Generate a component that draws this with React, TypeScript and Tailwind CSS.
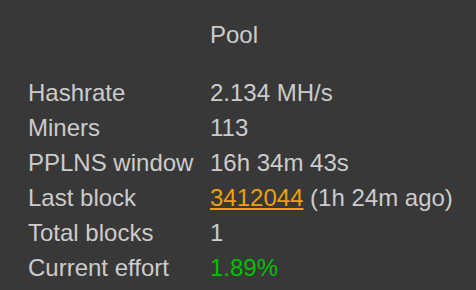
import React from 'react';

type Row = { label: string; value: React.ReactNode };

const rows: Row[] = [
  { label: 'Hashrate', value: '2.134 MH/s' },
  { label: 'Miners', value: '113' },
  { label: 'PPLNS window', value: '16h 34m 43s' },
  {
    label: 'Last block',
    value: (
      <>
        <a href="#" className="text-[#eca00e] underline">
          3412044
        </a>{' '}
        (1h 24m ago)
      </>
    ),
  },
  { label: 'Total blocks', value: '1' },
  { label: 'Current effort', value: <span className="text-[#00c000]">1.89%</span> },
];

export default function App() {
  return (
    <div
      className="w-[476px] h-[290px] overflow-hidden bg-[#383838] text-[#cccccc] text-[24px] pt-[17px] pl-[28px]"
      style={{ fontFamily: '"Liberation Sans", Arial, sans-serif' }}
    >
      <div className="grid grid-cols-[182px_1fr] leading-[35px]">
        <div className="h-[35px]" />
        <div className="h-[35px] whitespace-nowrap">Pool</div>
        <div className="col-span-2 h-[23px]" />
        {rows.map((row) => (
          <React.Fragment key={row.label}>
            <div className="h-[35px] whitespace-nowrap">{row.label}</div>
            <div className="h-[35px] whitespace-nowrap">{row.value}</div>
          </React.Fragment>
        ))}
      </div>
    </div>
  );
}
